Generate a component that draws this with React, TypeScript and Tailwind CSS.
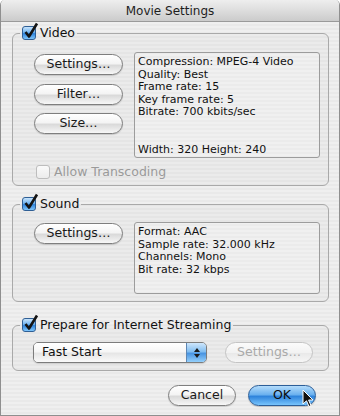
import type { ReactNode } from 'react';

const pinstripe =
  'bg-[repeating-linear-gradient(to_bottom,#efefef_0px,#efefef_2px,#e9e9e9_2px,#e9e9e9_4px)]';

function CheckBox({ checked, disabled }: { checked?: boolean; disabled?: boolean }) {
  if (!checked) {
    return (
      <span
        className={`block w-[14px] h-[14px] rounded-[3px] border ${
          disabled ? 'border-[#bdbdbd] bg-[linear-gradient(to_bottom,#fafafa,#ececec)]' : 'border-[#8a8a8a] bg-white'
        }`}
      />
    );
  }
  return (
    <span className="relative block w-[14px] h-[14px]">
      <span className="block w-[14px] h-[14px] rounded-[3px] border border-[#2f5f95] bg-[linear-gradient(to_bottom,#c8e4fc_0%,#6fb3f0_45%,#2f84dc_55%,#80c6fb_100%)]" />
      <svg className="absolute -top-[4px] left-[1px]" width="16" height="17" viewBox="0 0 16 17">
        <path d="M2.5 10 L6 14.5 L14 1.5" stroke="#141414" strokeWidth="2.6" fill="none" strokeLinejoin="round" />
      </svg>
    </span>
  );
}

function AquaButton({ children, width, disabled }: { children: ReactNode; width: string; disabled?: boolean }) {
  return (
    <div
      className={`${width} h-[21px] flex items-center justify-center rounded-full border text-[12.5px] leading-none ${
        disabled
          ? 'border-[#c4c4c4] text-[#a9a9a9] bg-[linear-gradient(to_bottom,#fbfbfb_0%,#f2f2f2_50%,#e9e9e9_55%,#f6f6f6_100%)]'
          : 'border-[#7e7e7e] text-[#1a1a1a] bg-[linear-gradient(to_bottom,#ffffff_0%,#f4f4f4_45%,#dadada_55%,#f7f7f7_100%)] shadow-[0_1px_1px_rgba(0,0,0,0.15)]'
      }`}
    >
      {children}
    </div>
  );
}

function Group({ label, children, className }: { label: string; children: ReactNode; className: string }) {
  return (
    <fieldset className={`ml-[11px] mr-[10px] rounded-[6px] border border-[#a9a9a9] bg-black/[0.015] ${className}`}>
      <legend className="ml-[7px] pl-[2px] pr-[2px]">
        <div className="flex items-center gap-[4px] h-[14px] text-[12.5px] text-[#111]">
          <CheckBox checked />
          <span>{label}</span>
        </div>
      </legend>
      {children}
    </fieldset>
  );
}

function InfoBox({ lines, height }: { lines: string[]; height: string }) {
  return (
    <div className={`w-[186px] ${height} border border-[#9c9c9c] rounded-[3px] bg-white/25 pt-[3px] pl-[3px] text-[11px] leading-[12.6px] text-[#111] overflow-hidden`}>
      {lines.map((l, i) => (
        <div key={i} className="h-[12.6px] whitespace-pre">
          {l}
        </div>
      ))}
    </div>
  );
}

export default function App() {
  return (
    <div className="font-['DejaVu_Sans',sans-serif]">
      <div className="relative w-[340px] h-[416px] flex flex-col rounded-t-[5px] border-x border-b border-[#8f8f8f] overflow-hidden">
        {/* title bar */}
        <div className="h-[22px] shrink-0 flex items-center justify-center pt-[1px] border-b border-[#9a9a9a] bg-[linear-gradient(to_bottom,#eeeeee_0%,#dddddd_50%,#cbcbcb_100%)] text-[12px] text-[#1e1e1e]">
          Movie Settings
        </div>

        <div className={`flex-1 ${pinstripe}`}>
          <Group label="Video" className="mt-[4px]">
            <div className="pt-[12px] pl-[21px] pr-[8px] pb-[6px]">
              <div className="flex gap-[11px]">
                <div className="mt-[2px] flex flex-col gap-[8.5px]">
                  <AquaButton width="w-[89px]">Settings…</AquaButton>
                  <AquaButton width="w-[89px]">Filter…</AquaButton>
                  <AquaButton width="w-[89px]">Size…</AquaButton>
                </div>
                <InfoBox
                  height="h-[106px]"
                  lines={[
                    'Compression: MPEG-4 Video',
                    'Quality: Best',
                    'Frame rate: 15',
                    'Key frame rate: 5',
                    'Bitrate: 700 kbits/sec',
                    ' ',
                    ' ',
                    'Width: 320 Height: 240',
                  ]}
                />
              </div>
              <div className="mt-[7px] ml-[2px] flex items-center gap-[4px] h-[14px] text-[12.5px] text-[#9a9a9a]">
                <CheckBox disabled />
                <span>Allow Transcoding</span>
              </div>
            </div>
          </Group>

          <Group label="Sound" className="mt-[11px]">
            <div className="pt-[11px] pl-[21px] pr-[8px] pb-[7px] flex gap-[11px]">
              <div className="mt-[1px]">
                <AquaButton width="w-[89px]">Settings…</AquaButton>
              </div>
              <InfoBox
                height="h-[72px]"
                lines={['Format: AAC', 'Sample rate: 32.000 kHz', 'Channels: Mono', 'Bit rate: 32 kbps']}
              />
            </div>
          </Group>

          <Group label="Prepare for Internet Streaming" className="mt-[16px]">
            <div className="pt-[10px] pl-[20px] pb-[7px] flex items-center gap-[18px]">
              <div className="w-[174px] h-[21px] flex rounded-[5px] border border-[#7c7c7c] overflow-hidden shadow-[0_1px_1px_rgba(0,0,0,0.12)]">
                <div className="flex-1 flex items-center pl-[8px] text-[12.5px] text-[#111] bg-[linear-gradient(to_bottom,#ffffff_0%,#f6f6f6_45%,#e6e6e6_55%,#fafafa_100%)]">
                  Fast Start
                </div>
                <div className="w-[20px] flex items-center justify-center border-l border-[#5d86b3] bg-[linear-gradient(to_bottom,#cfe6fb_0%,#83bff1_45%,#4a95e2_55%,#93cffb_100%)]">
                  <svg width="8" height="12" viewBox="0 0 8 12">
                    <path d="M4 1 L7 5 L1 5 Z" fill="#1b1b1b" />
                    <path d="M4 11 L7 7 L1 7 Z" fill="#1b1b1b" />
                  </svg>
                </div>
              </div>
              <AquaButton width="w-[88px]" disabled>
                Settings…
              </AquaButton>
            </div>
          </Group>

          <div className="mt-[14px] pr-[23px] flex justify-end gap-[12px]">
            <AquaButton width="w-[68px]">Cancel</AquaButton>
            <div className="w-[68px] h-[21px] flex items-center justify-center rounded-full border border-[#2c5e98] text-[12.5px] text-[#0d0d0d] bg-[linear-gradient(to_bottom,#b4dcfb_0%,#6bb1ef_45%,#2f84dc_55%,#78c4fc_100%)] shadow-[0_1px_1px_rgba(0,0,0,0.2)]">
              OK
            </div>
          </div>
        </div>

        {/* mouse pointer */}
        <svg className="absolute left-[301px] top-[389px]" width="12" height="19" viewBox="0 0 12 19">
          <path d="M1 1 L1 15 L4.5 11.8 L7 17.5 L9 16.6 L6.6 11 L11 11 Z" fill="#111" stroke="#fff" strokeWidth="1" strokeLinejoin="round" />
        </svg>
      </div>
    </div>
  );
}
